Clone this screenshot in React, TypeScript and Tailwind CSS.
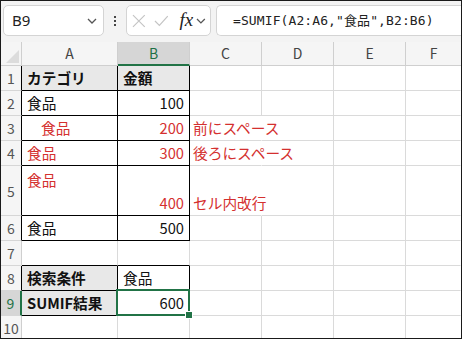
import React from "react";

const JP = "font-['Noto_Sans_CJK_JP','Noto_Sans',sans-serif]";
const RED = "text-[#d4302f]";
const GR = "border-r-[#dadada]";
const GB = "border-b-[#dadada]";
const KR = "border-r-black";
const KB = "border-b-black";
const NR = "border-r-transparent";

type CellProps = {
  w: string;
  r?: string;
  b?: string;
  className?: string;
  children?: React.ReactNode;
};

function Cell({ w, r = GR, b = GB, className = "", children }: CellProps) {
  return (
    <div
      className={`${w} shrink-0 h-full border-r border-b ${r} ${b} flex items-center px-[5px] pt-[1px] whitespace-nowrap ${className}`}
    >
      {children}
    </div>
  );
}

function RowHead({ n, r = "border-r-black", sel = false }: { n: number; r?: string; sel?: boolean }) {
  return (
    <div
      className={`w-[21px] shrink-0 h-full border-b border-b-[#d6d6d6] ${
        sel ? "border-r-2 border-r-[#217346] bg-[#d6d6d6] text-[#1e7145]" : `border-r ${r} bg-[#f5f5f5] text-[#555]`
      } flex items-center justify-center text-[14px] pt-[1px]`}
    >
      {n}
    </div>
  );
}

function Chevron({ className = "" }: { className?: string }) {
  return (
    <svg width="10" height="6" viewBox="0 0 10 6" className={className}>
      <path d="M1 1l4 4 4-4" fill="none" stroke="#555" strokeWidth="1.3" />
    </svg>
  );
}

function Toolbar() {
  return (
    <div className="h-[41px] bg-[#f3f3f3] flex items-start pt-[4px] pl-[2px] gap-0">
      <div className="w-[101px] h-[31px] bg-white border border-[#d4d4d4] rounded-[5px] flex items-center justify-between pl-[8px] pr-[6px]">
        <span className="text-[15px] text-[#222] font-['Noto_Sans',sans-serif]">B9</span>
        <Chevron />
      </div>
      <div className="w-[22px] h-[31px] flex flex-col items-center justify-center gap-[2px]">
        <span className="w-[2px] h-[2px] bg-[#444]" />
        <span className="w-[2px] h-[2px] bg-[#444]" />
        <span className="w-[2px] h-[2px] bg-[#444]" />
      </div>
      <div className="w-[85px] h-[31px] bg-white border border-[#d4d4d4] rounded-[5px] flex items-center pl-[5px] pr-[4px]">
        <svg width="14" height="14" viewBox="0 0 14 14">
          <path d="M1 1l12 12M13 1L1 13" stroke="#c4c4c4" strokeWidth="1.2" />
        </svg>
        <svg width="15" height="12" viewBox="0 0 15 12" className="ml-[8px]">
          <path d="M1 6l4.5 4.5L14 1" fill="none" stroke="#c4c4c4" strokeWidth="1.2" />
        </svg>
        <span className="ml-[11px] text-[19px] italic font-['Liberation_Serif',serif] text-[#222] leading-none -mt-[2px]">
          fx
        </span>
        <Chevron className="ml-[3px]" />
      </div>
      <div className="ml-[5px] flex-1 h-[31px] bg-white border border-[#d4d4d4] border-r-0 rounded-l-[5px] flex items-center pl-[16px]">
        <span className="text-[13px] tracking-[0.1px] text-[#222] font-['DejaVu_Sans_Mono','Noto_Sans_CJK_JP',monospace]">
          =SUMIF(A2:A6,"食品",B2:B6)
        </span>
      </div>
    </div>
  );
}

function ColHead() {
  const cols = ["C", "D", "E"];
  return (
    <div className="h-[24px] flex bg-[#f5f5f5] text-[14px] text-[#444]">
      <div className="w-[21px] shrink-0 h-full border-r border-b border-[#cfcfcf] relative">
        <div className="absolute right-[2px] bottom-[2px] w-0 h-0 border-l-[13px] border-l-transparent border-b-[13px] border-b-[#dcdcdc]" />
      </div>
      <div className="w-[96px] shrink-0 h-full border-r border-b border-[#cfcfcf] flex items-center justify-center">A</div>
      <div className="w-[72px] shrink-0 h-full border-r border-r-[#cfcfcf] border-b-2 border-b-[#217346] bg-[#d6d6d6] text-[#1e7145] flex items-center justify-center">
        B
      </div>
      {cols.map((c) => (
        <div key={c} className="w-[72px] shrink-0 h-full border-r border-b border-[#cfcfcf] flex items-center justify-center">
          {c}
        </div>
      ))}
      <div className="flex-1 h-full border-b border-[#cfcfcf] flex items-center justify-center">F</div>
    </div>
  );
}

const W_A = "w-[96px]";
const W = "w-[72px]";

export default function App() {
  return (
    <div className={`w-[462px] h-[339px] border border-[#1a1a1a] bg-white overflow-hidden ${JP} text-[14.7px] text-[#111]`}>
      <Toolbar />
      <ColHead />

      {/* 1 */}
      <div className="h-[25px] flex">
        <RowHead n={1} />
        <Cell w={W_A} r={KR} b={KB} className="bg-[#e8e8e8] font-bold">カテゴリ</Cell>
        <Cell w={W} r={KR} b={KB} className="bg-[#e8e8e8] font-bold">金額</Cell>
        <Cell w={W} />
        <Cell w={W} />
        <Cell w={W} />
        <Cell w="flex-1" r={NR} />
      </div>
      {/* 2 */}
      <div className="h-[25px] flex">
        <RowHead n={2} />
        <Cell w={W_A} r={KR} b={KB}>食品</Cell>
        <Cell w={W} r={KR} b={KB} className="justify-end">100</Cell>
        <Cell w={W} />
        <Cell w={W} />
        <Cell w={W} />
        <Cell w="flex-1" r={NR} />
      </div>
      {/* 3 */}
      <div className="h-[25px] flex">
        <RowHead n={3} />
        <Cell w={W_A} r={KR} b={KB} className={RED}>
          <span className="pl-[14px]">食品</span>
        </Cell>
        <Cell w={W} r={KR} b={KB} className={`justify-end ${RED}`}>200</Cell>
        <Cell w={W} r={NR} className={`${RED} relative z-10 !pl-[3px]`}>前にスペース</Cell>
        <Cell w={W} />
        <Cell w={W} />
        <Cell w="flex-1" r={NR} />
      </div>
      {/* 4 */}
      <div className="h-[25px] flex">
        <RowHead n={4} />
        <Cell w={W_A} r={KR} b={KB} className={RED}>食品</Cell>
        <Cell w={W} r={KR} b={KB} className={`justify-end ${RED}`}>300</Cell>
        <Cell w={W} r={NR} className={`${RED} relative z-10 !pl-[3px]`}>後ろにスペース</Cell>
        <Cell w={W} />
        <Cell w={W} />
        <Cell w="flex-1" r={NR} />
      </div>
      {/* 5 */}
      <div className="h-[50px] flex">
        <RowHead n={5} />
        <Cell w={W_A} r={KR} b={KB} className={`${RED} !items-start pt-[3px]`}>食品</Cell>
        <Cell w={W} r={KR} b={KB} className={`justify-end ${RED} !items-end pb-[1px]`}>400</Cell>
        <Cell w={W} r={NR} className={`${RED} !items-end pb-[1px] relative z-10 !pl-[3px]`}>セル内改行</Cell>
        <Cell w={W} />
        <Cell w={W} />
        <Cell w="flex-1" r={NR} />
      </div>
      {/* 6 */}
      <div className="h-[25px] flex">
        <RowHead n={6} />
        <Cell w={W_A} r={KR} b={KB}>食品</Cell>
        <Cell w={W} r={KR} b={KB} className="justify-end">500</Cell>
        <Cell w={W} />
        <Cell w={W} />
        <Cell w={W} />
        <Cell w="flex-1" r={NR} />
      </div>
      {/* 7 */}
      <div className="h-[25px] flex">
        <RowHead n={7} r="border-r-[#cfcfcf]" />
        <Cell w={W_A} b={KB} />
        <Cell w={W} b={KB} />
        <Cell w={W} />
        <Cell w={W} />
        <Cell w={W} />
        <Cell w="flex-1" r={NR} />
      </div>
      {/* 8 */}
      <div className="h-[25px] flex">
        <RowHead n={8} />
        <Cell w={W_A} r={KR} b={KB} className="bg-[#e8e8e8] font-bold">検索条件</Cell>
        <Cell w={W} r={KR} b={KB}>食品</Cell>
        <Cell w={W} />
        <Cell w={W} />
        <Cell w={W} />
        <Cell w="flex-1" r={NR} />
      </div>
      {/* 9 */}
      <div className="h-[25px] flex">
        <RowHead n={9} sel />
        <Cell w={W_A} r={KR} b={KB} className="bg-[#e8e8e8] font-bold">SUMIF結果</Cell>
        <div className={`${W} shrink-0 h-full border-r border-b border-r-black border-b-black relative flex items-center justify-end px-[5px] pt-[1px]`}>
          600
          <div className="absolute -top-[2px] -left-[2px] -right-[1px] -bottom-[1px] border-2 border-[#217346] pointer-events-none" />
          <div className="absolute -right-[4px] -bottom-[4px] w-[6px] h-[6px] bg-[#217346] border border-white box-content z-10" />
        </div>
        <Cell w={W} />
        <Cell w={W} />
        <Cell w={W} />
        <Cell w="flex-1" r={NR} />
      </div>
      {/* 10 */}
      <div className="h-[25px] flex">
        <RowHead n={10} r="border-r-[#cfcfcf]" />
        <Cell w={W_A} />
        <Cell w={W} />
        <Cell w={W} />
        <Cell w={W} />
        <Cell w={W} />
        <Cell w="flex-1" r={NR} />
      </div>
    </div>
  );
}
